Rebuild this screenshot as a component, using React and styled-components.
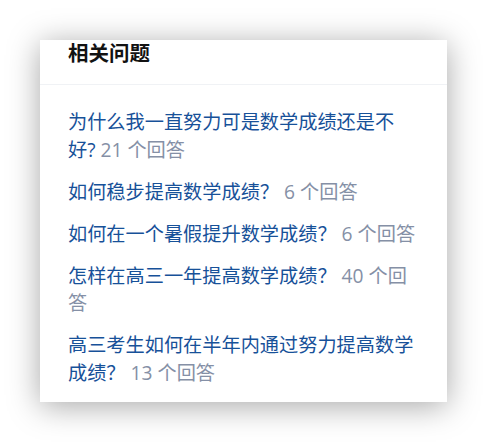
import React from "react";
import styled, { createGlobalStyle } from "styled-components";

const GlobalStyle = createGlobalStyle`
  html, body {
    margin: 0;
    padding: 0;
    background: #fff;
  }
  body {
    font-family: "Open Sans", "Noto Sans CJK SC", sans-serif;
  }
`;

const Page = styled.div`
  padding: 40px;
`;

const Card = styled.div`
  width: 407px;
  background: #fff;
  box-shadow: 0 4px 30px rgba(0, 0, 0, 0.35);
`;

const Header = styled.div`
  padding: 2px 28px 22px;
  border-bottom: 1px solid #f0f2f5;
`;

const Title = styled.h2`
  margin: 0;
  font-family: "Noto Sans CJK SC", sans-serif;
  font-size: 20.5px;
  line-height: 20px;
  font-weight: 700;
  color: #121212;
`;

const List = styled.ul`
  list-style: none;
  margin: 0;
  padding: 23px 28px 16px;
  display: flex;
  flex-direction: column;
  gap: 14.5px;
`;

const Item = styled.li`
  font-size: 19.2px;
  line-height: 27.5px;
`;

const Link = styled.a`
  color: #175199;
  text-decoration: none;
`;

const Meta = styled.span`
  color: #8590a6;
`;

const questions = [
  { title: "为什么我一直努力可是数学成绩还是不好?", answers: 21 },
  { title: "如何稳步提高数学成绩？", answers: 6 },
  { title: "如何在一个暑假提升数学成绩？", answers: 6 },
  { title: "怎样在高三一年提高数学成绩？", answers: 40 },
  { title: "高三考生如何在半年内通过努力提高数学成绩？", answers: 13 },
];

export default function App() {
  return (
    <>
      <GlobalStyle />
      <Page>
        <Card>
          <Header>
            <Title>相关问题</Title>
          </Header>
          <List>
            {questions.map((q) => (
              <Item key={q.title}>
                <Link href="#">{q.title}</Link> <Meta>{q.answers} 个回答</Meta>
              </Item>
            ))}
          </List>
        </Card>
      </Page>
    </>
  );
}
